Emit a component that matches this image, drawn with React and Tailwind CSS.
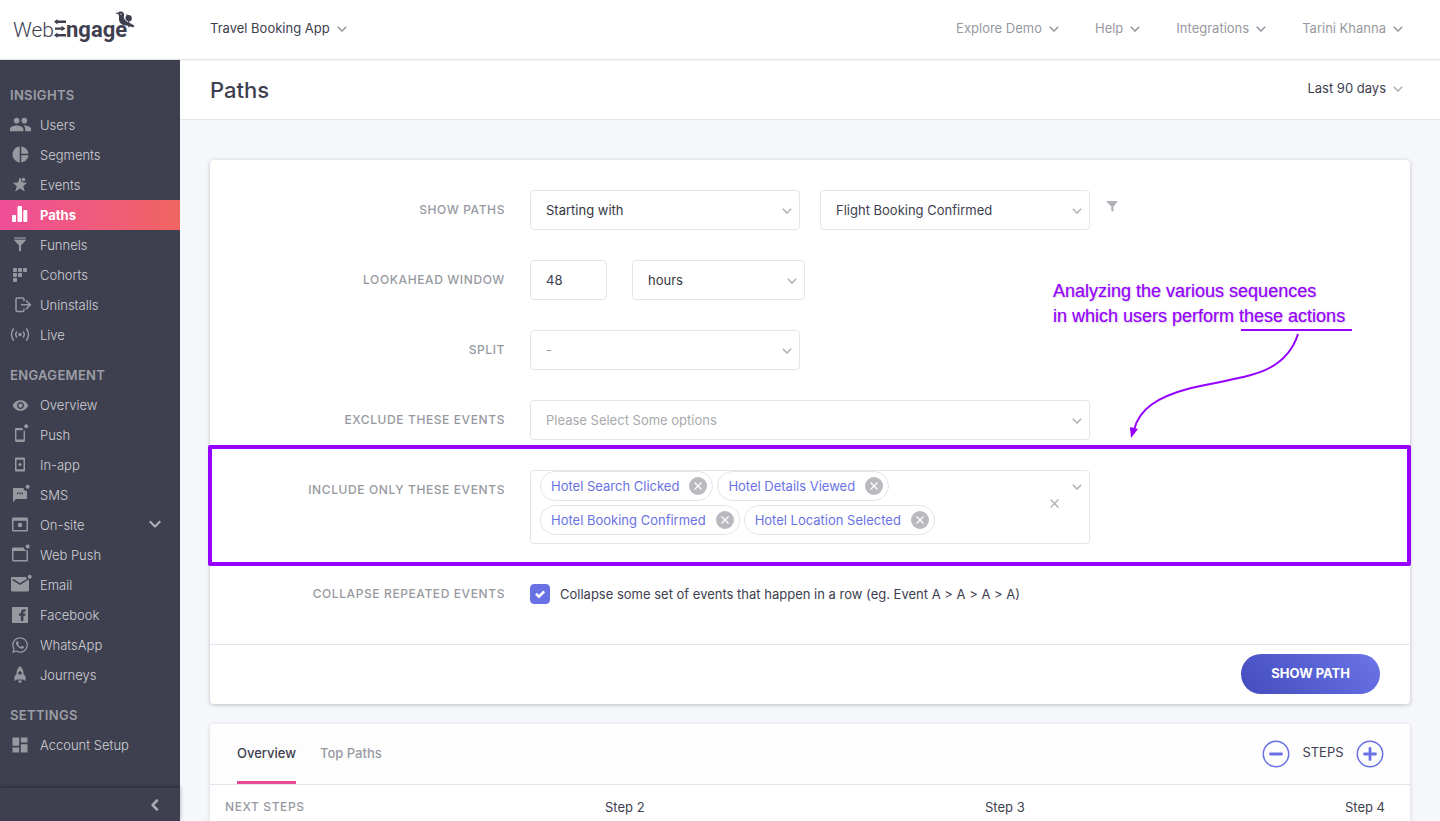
import { useState } from "react";
import { MdPeople, MdPieChart, MdDashboard, MdRemoveRedEye } from "react-icons/md";
import { FaWhatsapp } from "react-icons/fa";

function Chevron({ className = "", strokeWidth = 1.6 }) {
  return (
    <svg viewBox="0 0 10 6" className={"h-[6px] w-[10px] shrink-0 " + className} fill="none" stroke="currentColor" strokeWidth={strokeWidth} aria-hidden="true">
      <path d="M0.8 0.8 5 5 9.2 0.8" />
    </svg>
  );
}

function Svg({ children }) {
  return (
    <svg viewBox="0 0 20 20" className="h-5 w-5 overflow-visible" fill="currentColor" aria-hidden="true">
      {children}
    </svg>
  );
}

const icons = {
  users: <MdPeople className="mb-px h-[23px] w-[23px]" />,
  segments: <MdPieChart className="mb-px h-[19px] w-[19px]" />,
  events: (
    <Svg>
      <path d="M9.6 2.6 8 7.4 2.8 7.7l4 3.5-1.5 5.3L10 13.6l4.7 2.9-1.5-5.2 3.9-3.6-3.3-.3a2.6 2.6 0 0 1-2.7-3.3Z" />
      <circle cx="13.4" cy="4.6" r="1.8" />
    </Svg>
  ),
  paths: (
    <Svg>
      <rect x="2" y="10" width="4" height="7" rx="1" />
      <rect x="7.5" y="1" width="4.5" height="16" rx="1" />
      <rect x="13.3" y="5" width="4" height="12" rx="1" />
    </Svg>
  ),
  funnels: (
    <Svg>
      <path d="M4 2h12v2.6H4z" opacity=".6" />
      <path d="M4 5h12l-4.900 5.600v5.200L9 16.600v-6Z" />
    </Svg>
  ),
  cohorts: (
    <Svg>
      <rect x="3" y="3" width="4" height="4" rx="1" />
      <rect x="8" y="3" width="4" height="4" rx="1" />
      <rect x="13" y="3" width="4" height="4" rx="1" />
      <rect x="3" y="8" width="4" height="4" rx="1" />
      <rect x="8" y="8" width="4" height="4" rx="1" />
      <rect x="3" y="13" width="4" height="4" rx="1" />
    </Svg>
  ),
  uninstalls: (
    <Svg>
      <path d="M14 6V4.200C14 3.500 13.500 3 12.800 3H7.200C6.500 3 6 3.500 6 4.200v11.100c0 .7.500 1.200 1.200 1.200h5.600c.7 0 1.200-.5 1.200-1.200V13.500M11 9.800h9.500M16 5.500l4.300 4.300L16 14.100" fill="none" stroke="currentColor" strokeWidth="1.500" />
    </Svg>
  ),
  live: (
    <Svg>
      <circle cx="10" cy="9.500" r="1.700" />
      <path d="M7 6.500a4.600 4.600 0 0 0 0 6M13 6.500a4.600 4.600 0 0 1 0 6M3.800 3.500a9 9 0 0 0 0 12M16.200 3.500a9 9 0 0 1 0 12" fill="none" stroke="currentColor" strokeWidth="1.500" />
    </Svg>
  ),
  overview: <MdRemoveRedEye className="h-[17px] w-[17px]" />,
  push: (
    <Svg>
      <path d="M12.500 3.700H6.500C5.900 3.700 5.700 4 5.700 4.500v10.800c0 .6.3.9.8.9h7c.6 0 .8-.3.8-.9V5.800" fill="none" stroke="currentColor" strokeWidth="1.400" />
      <path d="M5.500 3.200h7v2h-7zM5.500 14.500h9v2h-9z" />
      <circle cx="16.200" cy="1.300" r="2" />
    </Svg>
  ),
  inapp: (
    <Svg>
      <path fillRule="evenodd" d="M6.300 2.500h7.400c.8 0 1.300.5 1.300 1.300v11.400c0 .8-.5 1.300-1.300 1.300H6.300c-.8 0-1.300-.5-1.300-1.300V3.800c0-.8.5-1.300 1.300-1.300Zm.2 2.300v9.400h7V4.800Z" />
      <circle cx="10" cy="9.500" r="1.500" />
    </Svg>
  ),
  sms: (
    <Svg>
      <path fillRule="evenodd" d="M4.300 3h9.200a3 3 0 0 0 3.500 3v6.700c0 .8-.5 1.300-1.300 1.300H6l-3 3V4.300C3 3.500 3.500 3 4.300 3ZM7 7.500v1.800h1.400V7.500Zm2.300 0v1.800h1.400V7.500Zm2.300 0v1.800H13V7.500Z" />
      <circle cx="17.700" cy="1.800" r="2" />
    </Svg>
  ),
  onsite: (
    <Svg>
      <path fillRule="evenodd" d="M3.500 2.500h13c1 0 1.500.6 1.500 1.500v11c0 1-.6 1.500-1.500 1.500h-13C2.500 16.500 2 15.900 2 15V4c0-1 .6-1.500 1.500-1.500Zm0 3.200V15h13V5.700Z" />
      <circle cx="10" cy="10" r="2.300" />
    </Svg>
  ),
  webpush: (
    <Svg>
      <path fillRule="evenodd" d="M3.500 2.500h10.300a3.400 3.400 0 0 0 4.200 3V15c0 1-.6 1.500-1.500 1.500h-13C2.500 16.500 2 15.900 2 15V4c0-1 .6-1.500 1.500-1.500Zm0 3.500v9h13V6Z" />
      <circle cx="17.700" cy="1.500" r="2" />
    </Svg>
  ),
  email: (
    <Svg>
      <path d="M2.300 2h13.900a3 3 0 0 0 2.800 3.200V15c0 .8-.5 1.500-1.300 1.500H2.300C1.500 16.500 1 15.800 1 15V3.300C1 2.500 1.500 2 2.300 2Z" />
      <path d="m2.800 4.500 7.200 4.700 6.800-4.400" fill="none" stroke="#3e404f" strokeWidth="1.500" />
      <circle cx="19.700" cy="1.800" r="2" />
    </Svg>
  ),
  facebook: (
    <Svg>
      <path fillRule="evenodd" d="M3.300 2h13.400c.8 0 1.300.5 1.300 1.300v13.400c0 .8-.5 1.300-1.300 1.300H3.300C2.500 18 2 17.500 2 16.700V3.300C2 2.500 2.500 2 3.300 2Zm7.600 14h2.500v-5.200h1.900l.3-2.200h-2.200V7.500c0-.7.300-1.100 1.100-1.100h1.200V4.400c-2.900-.4-4.800.4-4.800 2.900v1.300H9v2.200h1.900Z" />
    </Svg>
  ),
  whatsapp: <FaWhatsapp className="h-[18px] w-[18px]" />,
  journeys: (
    <Svg>
      <path fillRule="evenodd" d="M10 1c2.200 1.900 3.500 4.300 3.500 7v1.300l2 2.200V16l-2.400-1.500H6.900L4.500 16v-4.500l2-2.200V8c0-2.700 1.300-5.100 3.500-7Zm0 5.200a1.800 1.800 0 1 0 0 3.600 1.800 1.800 0 0 0 0-3.600Z" />
      <path d="M8 15.400h4L11.300 17 10 18.300 8.700 17Z" />
    </Svg>
  ),
  account: <MdDashboard className="h-5 w-5" />,
};

const sections = [
  {
    title: "Insights",
    items: [
      ["Users", "users"],
      ["Segments", "segments"],
      ["Events", "events"],
      ["Paths", "paths"],
      ["Funnels", "funnels"],
      ["Cohorts", "cohorts"],
      ["Uninstalls", "uninstalls"],
      ["Live", "live"],
    ],
  },
  {
    title: "Engagement",
    items: [
      ["Overview", "overview"],
      ["Push", "push"],
      ["In-app", "inapp"],
      ["SMS", "sms"],
      ["On-site", "onsite"],
      ["Web Push", "webpush"],
      ["Email", "email"],
      ["Facebook", "facebook"],
      ["WhatsApp", "whatsapp"],
      ["Journeys", "journeys"],
    ],
  },
  { title: "Settings", items: [["Account Setup", "account"]] },
];

function Logo() {
  return (
    <svg viewBox="0 0 124 34" className="h-[34px] w-[124px] overflow-visible" fill="#3e404f" role="img" aria-label="WebEngage">
      <text x="1" y="25" fontFamily="Roboto, sans-serif" fontWeight="300" fontSize="21">Web</text>
      <text x="54" y="25" fontFamily="Roboto, sans-serif" fontWeight="700" fontSize="22">ngage</text>
      <path d="M42 9.700 45.500 7v1.600H54v2.300h-8.500v1.600ZM43 15.400h6.500v-1.600l4 2.700-4 2.700v-1.500H43ZM42 23.200l3.500-2.700v1.600H54v2.300h-8.500V26Z" />
      <path d="M102.800 1.100 106.300.5c1-1.400 4-1.500 5.200.3 1 1.500.5 2.900.3 4.200.1 1.800 1.500 3.200 3.200 4.200l7.500 4.500-1.200 1.800-3.500-1.300-.7 1.300-1.800-2C110.500 13.500 107.400 11.500 107 7.700c-.2-2 .4-3.700-.6-5.400Z" />
      <path d="M113.400 7.600c-.5-1.500 0-3.200 1.100-3.900-.1-.8-.5-1.100-.9-1.400 1.300.1 1.900.5 2.300.9 1.900-.5 3.800.7 4 2.700.2 2.100-1.200 3.300-3 3.500l.3 1.500c-1.600-.5-3.200-1.600-3.800-3.300Z" />
      <circle cx="109" cy="2.200" r=".6" fill="#fff" />
      <path d="M112.700 4.500c-.2 2.600 1.400 4.500 3.400 5.500" stroke="#fff" strokeWidth=".9" fill="none" />
    </svg>
  );
}

function Sidebar() {
  return (
    <aside className="flex w-[180px] shrink-0 flex-col bg-[#3e404f]">
      <nav className="flex flex-1 flex-col gap-[10px] pt-5">
        {sections.map((s) => (
          <section key={s.title}>
            <h2 className="px-[10px] text-[13px] leading-[30px] font-semibold tracking-wide text-[#9c9ea6] uppercase">{s.title}</h2>
            <ul>
              {s.items.map(([label, icon]) => {
                const active = label === "Paths";
                return (
                  <li key={label}>
                    <a
                      href={"#" + icon}
                      aria-current={active ? "page" : undefined}
                      className={
                        "flex h-[30px] items-center text-[13px] " +
                        (active ? "bg-linear-to-r from-[#ef4e97] to-[#f06461] font-bold text-white" : "font-light text-[#d0d1d5]")
                      }
                    >
                      <span className={"flex w-10 items-center justify-center " + (active ? "text-white" : "text-[#9799a1]")}>{icons[icon]}</span>
                      <span className="flex-1 pt-[2px]">{label}</span>
                      {label === "On-site" && <Chevron className="mr-5 mb-[2px] scale-125 text-[#b1b2b8]" />}
                    </a>
                  </li>
                );
              })}
            </ul>
          </section>
        ))}
      </nav>
      <button type="button" aria-label="Collapse sidebar" className="flex h-[33px] items-center justify-end pr-5 text-[#a9abb2] shadow-[0_-1px_4px_rgba(0,0,0,0.35)]">
        <Chevron className="rotate-90 scale-125" strokeWidth={2} />
      </button>
    </aside>
  );
}

function TopBar() {
  return (
    <header className="z-10 flex h-[60px] shrink-0 items-center border-b border-[#e2e3e6] bg-white pr-[37px] pb-[2px] text-[13px] shadow-[0_1px_3px_rgba(0,0,0,0.06)]">
      <a href="#home" className="flex w-[210px] items-center pl-3">
        <Logo />
      </a>
      <button type="button" className="flex items-center gap-[7px] text-[#3e404f]">
        Travel Booking App <Chevron className="text-[#9799a1]" />
      </button>
      <nav className="ml-auto flex gap-9 text-[#9799a1]">
        {["Explore Demo", "Help", "Integrations", "Tarini Khanna"].map((t) => (
          <button key={t} type="button" className="flex items-center gap-[7px]">
            {t} <Chevron />
          </button>
        ))}
      </nav>
    </header>
  );
}

function Select({ id, label, className, textClass = "text-[#35363f]", options }) {
  return (
    <div className={"relative " + className}>
      <select id={id} aria-label={label} className={"h-10 w-full appearance-none rounded border border-[#e4e5e8] bg-white px-[15px] pt-[2px] text-[13px] outline-none " + textClass}>
        {options.map((o) => (
          <option key={o}>{o}</option>
        ))}
      </select>
      <Chevron className="pointer-events-none absolute top-[18px] right-2 text-[#b1b2b8]" />
    </div>
  );
}

function Row({ label, htmlFor, children }) {
  return (
    <div className="flex gap-[25px]">
      <label htmlFor={htmlFor} className="w-[295px] shrink-0 text-right text-xs leading-10 font-medium tracking-wider text-[#9799a1] uppercase">
        {label}
      </label>
      <div className="flex min-w-0 flex-1">{children}</div>
    </div>
  );
}

function Cross({ className }) {
  return (
    <svg viewBox="0 0 8 8" className={className} fill="none" stroke="currentColor" strokeWidth="1.300" aria-hidden="true">
      <path d="m.5.5 7 7M7.500.5l-7 7" />
    </svg>
  );
}

function IncludeField() {
  const [events, setEvents] = useState(["Hotel Search Clicked", "Hotel Details Viewed", "Hotel Booking Confirmed", "Hotel Location Selected"]);
  return (
    <div id="include" role="group" aria-label="Include only these events" className="flex min-h-10 w-[560px] rounded border border-[#e4e5e8] pr-[7px] pb-2 pl-[9px]">
      <ul className="flex max-w-[460px] flex-1 flex-wrap gap-1">
        {events.map((e) => (
          <li key={e} className="flex h-[30px] items-center gap-[10px] rounded-full border border-[#e4e5e8] pr-[5px] pl-[10px] text-[13px] text-[#6972e4]">
            <span className="pt-px">{e}</span>
            <button type="button" aria-label={"Remove " + e} onClick={() => setEvents(events.filter((x) => x !== e))} className="flex h-[18px] w-[18px] items-center justify-center rounded-full bg-[#b9bac0] text-white">
              <Cross className="h-2 w-2" />
            </button>
          </li>
        ))}
      </ul>
      <div className="ml-auto flex gap-[13px]">
        <button type="button" aria-label="Clear all" onClick={() => setEvents([])} className="flex items-center text-[#b1b2b8]">
          <Cross className="h-[9px] w-[9px]" />
        </button>
        <button type="button" aria-label="Open options" className="flex h-8 items-center text-[#b1b2b8]">
          <Chevron />
        </button>
      </div>
    </div>
  );
}

function Annotation() {
  return (
    <div className="pointer-events-none absolute top-[119px] left-[843px] font-['Liberation_Sans',Arial,sans-serif] text-lg leading-[25px] whitespace-nowrap text-[#9500ff] [text-shadow:0_0_1px_rgba(149,0,255,0.4),1px_1px_2px_rgba(0,0,0,0.15)]">
      <p>Analyzing the various sequences</p>
      <p>in which users perform these actions</p>
      <svg viewBox="0 0 310 112" className="absolute top-[49px] left-0 h-[112px] w-[310px]" fill="none" stroke="#9500ff" strokeWidth="2" aria-hidden="true">
        <path d="M188 2h111" />
        <path d="M245 6C239 25 225 40 198 47C180 52 155 56 138 60C104 69 86 81 81 102" />
        <path d="m77 99 8 2-7 9Z" fill="#9500ff" stroke="none" />
      </svg>
    </div>
  );
}

function FilterCard() {
  return (
    <form className="relative rounded bg-white shadow-[0_1px_4px_rgba(62,64,79,0.3)]" onSubmit={(e) => e.preventDefault()}>
      <div className="flex flex-col gap-[30px] py-[30px]">
        <Row label="Show paths" htmlFor="show">
          <Select id="show" className="w-[270px]" options={["Starting with", "Ending with"]} />
          <Select id="event" label="Event" className="ml-5 w-[270px]" textClass="text-[#3e404f]" options={["Flight Booking Confirmed"]} />
          <button type="button" aria-label="Filter" className="ml-4 h-8 text-[#b1b2b8]">
            <svg viewBox="0 0 12 12" className="h-3 w-3" fill="currentColor" aria-hidden="true">
              <path d="M.7 1h10.600v1.500H.7zM1.200 2.500h9.600L7.500 6.500v5l-2.200-.6V6.500Z" />
            </svg>
          </button>
        </Row>
        <Row label="Lookahead window" htmlFor="window">
          <input id="window" type="text" defaultValue="48" className="h-10 w-[77px] rounded border border-[#e4e5e8] px-[15px] text-[13px] text-[#3e404f] outline-none" />
          <Select id="unit" label="Window unit" className="ml-[25px] w-[173px]" options={["hours", "days"]} />
        </Row>
        <Row label="Split" htmlFor="split">
          <Select id="split" className="w-[270px]" textClass="text-[#9799a1]" options={["-"]} />
        </Row>
        <Row label="Exclude these events" htmlFor="exclude">
          <Select id="exclude" className="w-[560px]" textClass="text-[#a9aaae]" options={["Please Select Some options"]} />
        </Row>
        <div className="relative">
          <div className="pointer-events-none absolute -top-[25px] -right-px -bottom-[22px] -left-[2px] rounded-xs border-4 border-[#9500ff]" />
          <Row label="Include only these events" htmlFor="include">
            <IncludeField />
          </Row>
        </div>
        <Row label="Collapse repeated events" htmlFor="collapse">
          <label className="flex items-center gap-[10px] text-[13px] text-[#3e404f]">
            <span className="relative flex">
              <input id="collapse" type="checkbox" defaultChecked className="peer h-5 w-5 appearance-none rounded border border-[#c9cace] checked:border-[#6972e4] checked:bg-[#6972e4]" />
              <svg viewBox="0 0 20 20" className="pointer-events-none absolute inset-0 hidden h-5 w-5 peer-checked:block" fill="none" stroke="#fff" strokeWidth="2.600" aria-hidden="true">
                <path d="m6 9.800 3 2.900 5.200-5.300" />
              </svg>
            </span>
            <span className="pt-[2px]">Collapse some set of events that happen in a row (eg. Event A &gt; A &gt; A &gt; A)</span>
          </label>
        </Row>
      </div>
      <div className="flex h-[60px] items-center justify-end border-t border-[#e4e5e8] pr-[30px] pb-[2px]">
        <button type="submit" className="h-10 rounded-full bg-linear-45 from-[#444cbd] to-[#6b75e8] px-[30px] text-[13px] font-bold text-white">
          SHOW PATH
        </button>
      </div>
      <Annotation />
    </form>
  );
}

function StepButton({ plus }) {
  return (
    <button type="button" aria-label={plus ? "More steps" : "Fewer steps"} className="text-[#6972e4]">
      <svg viewBox="0 0 28 28" className="block h-7 w-7" fill="none" stroke="currentColor" aria-hidden="true">
        <circle cx="14" cy="14" r="12.700" strokeWidth="1.500" />
        <path d={plus ? "M8.500 14h11M14 8.500v11" : "M8.500 14h11"} strokeWidth="2.800" strokeLinecap="round" />
      </svg>
    </button>
  );
}

function ResultsCard() {
  return (
    <section className="flex-1 rounded-t bg-white shadow-[0_1px_4px_rgba(62,64,79,0.2)]">
      <div className="flex h-[61px] items-stretch rounded-t border-b border-[#e4e5e8] bg-[#fdfdfd] pr-[26px] pl-[27px] text-[13px]">
        <div role="tablist" className="flex gap-6 font-medium">
          <button role="tab" aria-selected="true" type="button" className="border-b-[3px] border-[#ea4c94] pt-[2px] text-[#3e404f]">Overview</button>
          <button role="tab" aria-selected="false" type="button" className="border-b-[3px] border-transparent pt-[2px] text-[#9799a1]">Top Paths</button>
        </div>
        <div className="ml-auto flex items-center gap-3 pb-px text-[#3e404f]">
          <StepButton />
          <span className="w-[42px] pb-px text-center">STEPS</span>
          <StepButton plus />
        </div>
      </div>
      <table className="w-full table-fixed text-left text-[13px] text-[#3e404f]">
        <thead>
          <tr className="h-9">
            <th className="w-[380px] pt-2 pl-[15px] text-xs font-medium tracking-wider text-[#9799a1]">NEXT STEPS</th>
            <th className="w-[380px] pt-[10px] pl-[15px] font-normal">Step 2</th>
            <th className="pt-[10px] pl-[15px] font-normal">Step 3</th>
            <th className="pt-[10px] pr-[25px] text-right font-normal">Step 4</th>
          </tr>
        </thead>
      </table>
    </section>
  );
}

export default function App() {
  return (
    <div className="flex min-h-screen flex-col bg-[#f6f7fb] font-[Inter,sans-serif] text-[#3e404f]">
      <TopBar />
      <div className="flex flex-1">
        <Sidebar />
        <main className="flex min-w-0 flex-1 flex-col">
          <div className="flex h-[60px] items-center justify-between border-b border-[#e4e5e8] bg-white pr-[37px] pl-[30px]">
            <h1 className="pt-[2px] text-[22px] font-medium">Paths</h1>
            <button type="button" className="flex items-center gap-[7px] pb-px text-[13px]">
              Last 90 days <Chevron className="text-[#b1b2b8]" />
            </button>
          </div>
          <div className="flex flex-1 flex-col gap-5 px-[30px] pt-10">
            <FilterCard />
            <ResultsCard />
          </div>
        </main>
      </div>
    </div>
  );
}
